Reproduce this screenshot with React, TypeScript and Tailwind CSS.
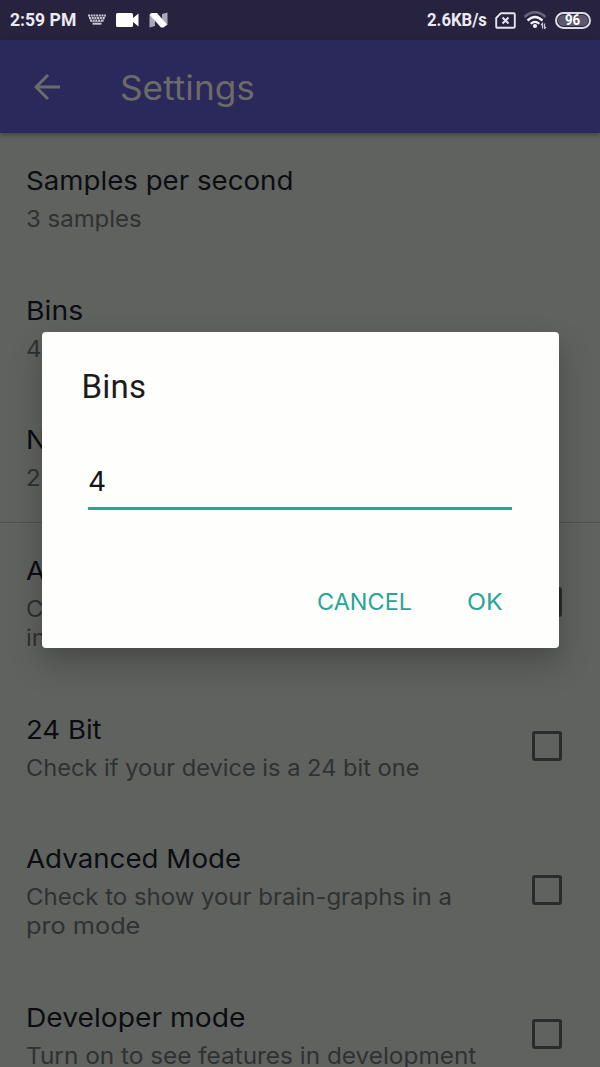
import type { ReactNode } from 'react';

const TITLE = 'w-max origin-left text-[26px] leading-[32px] text-[#0c0d12] whitespace-nowrap';
const SUMMARY = 'w-max origin-left text-[22.4px] leading-[28.8px] text-[#2f3132] whitespace-nowrap';

function StatusBar() {
  return (
    <header className="flex h-10 shrink-0 items-center bg-[#27233f] pl-[10px] pr-[9px] font-['Roboto',sans-serif] font-bold text-[#eceaf0]">
      <span className="w-[67px] origin-left scale-x-[0.95] whitespace-nowrap pt-[2px] text-[18.500px]">2:59 PM</span>
      <svg className="ml-[11px] h-[12px] w-[18px]" viewBox="0 0 18 12" fill="none" stroke="#c9c7d2">
        <path d="M0 1.500H18M1 4H17M2 6.500H16" strokeWidth="1.900" strokeDasharray="2 .7" />
        <path d="M.5 1L3 7.500H15L17.500 1" strokeWidth="1" opacity=".55" />
        <path d="M4.500 9.700H13.500" strokeWidth="2" />
      </svg>
      <svg className="ml-[10px] h-[16px] w-[23px]" viewBox="0 0 23 16" fill="#fdfdfd">
        <path d="M1.500 1H15.500Q17 1 17 2.500V6L22.500 1.500V14.500L17 10V13.500Q17 15 15.500 15H1.500Q0 15 0 13.500V2.500Q0 1 1.500 1Z" />
      </svg>
      <svg className="ml-[10px] h-[16px] w-[19px]" viewBox="0 0 19 16">
        <path d="M.5 2.500L6 1V14L.5 15.500ZM13 2L18.500 .5V13L13 15Z" fill="#a9a7b8" />
        <path d="M2 1H8L18 12.500L14.500 15.500H12L.8 3Z" fill="#fdfdfd" />
      </svg>
      <div className="ml-auto flex items-center">
        <span className="w-[60px] origin-left scale-x-[0.9] whitespace-nowrap pt-[2px] text-[18.500px]">2.6KB/s</span>
        <svg className="ml-[8px] h-[17px] w-[21px]" viewBox="0 0 21 17" fill="none" stroke="#e6e4ec">
          <path d="M6 1.200H18.500Q19.800 1.200 19.800 2.500V14.500Q19.800 15.800 18.500 15.800H2.500Q1.200 15.800 1.200 14.500V6Z" strokeWidth="1.900" strokeLinejoin="round" />
          <path d="M7.500 5.500L13.500 11.500M13.500 5.500L7.500 11.500" strokeWidth="2" />
        </svg>
        <svg className="ml-[8px] h-[18px] w-[24px]" viewBox="0 0 24 18" fill="none">
          <path d="M.5 6Q11 -3.500 21.500 6" stroke="#68657c" strokeWidth="2.500" />
          <path d="M3.500 9.500Q11 2.500 18.500 9.500" stroke="#f2f1f5" strokeWidth="2.400" />
          <path d="M6.700 12.800Q11 8.800 15.300 12.800" stroke="#f2f1f5" strokeWidth="2.200" />
          <circle cx="11" cy="15" r="2.100" fill="#f2f1f5" />
          <path d="M18.500 17.500V12.500L17 14M20.500 12.500V17.500L22 16" stroke="#c9c7d2" strokeWidth="1.200" />
        </svg>
        <div className="ml-[7px] flex h-[17px] w-[36px] items-center justify-center rounded-full border-2 border-[#dcdae3] p-px">
          <span className="flex h-full w-full items-center justify-center rounded-full bg-[#5c596f] leading-none text-white">
            <span className="scale-x-[0.88] text-[15px]">96</span>
          </span>
        </div>
      </div>
    </header>
  );
}

function AppBar() {
  return (
    <div className="z-[1] flex h-[93px] shrink-0 items-center bg-[#2b285b] pl-[34px] shadow-[0_2px_4px_rgba(0,0,0,0.3)]">
      <svg className="h-[26px] w-[26px]" viewBox="0 0 26 26" fill="none" stroke="#6b6b67" strokeWidth="3">
        <path d="M26 13H2M14 1L2 13L14 25" />
      </svg>
      <h1 className="ml-[59.500px] origin-left scale-x-[1.052] pt-[2px] text-[33.500px] leading-[40px] text-[#6b6b67]">Settings</h1>
    </div>
  );
}

function Row({ height, children, checkbox = false }: { height: string; children: ReactNode; checkbox?: boolean }) {
  return (
    <div className={`flex shrink-0 items-start justify-between pl-[26px] pr-[38px] ${height}`}>
      <div className="pt-[32px]">{children}</div>
      {checkbox && <span className="h-[30px] w-[30px] shrink-0 self-center rounded-[3px] border-[3px] border-[#2a2b2c]" />}
    </div>
  );
}

function Dialog() {
  return (
    <div className="absolute left-[41.500px] top-[332px] flex h-[316px] w-[517px] flex-col rounded-[4px] bg-[#fefefd] pl-[40px] pr-[47px] shadow-[0_16px_32px_2px_rgba(0,0,0,0.2),0_6px_10px_rgba(0,0,0,0.04)]">
      <h2 className="pt-[35px] font-['Roboto',sans-serif] text-[33px] leading-[40px] tracking-[0.2px] text-[#1c1c1e]">Bins</h2>
      <div className="ml-[6px] mt-[52px] h-[51px] border-b-[3px] border-[#26a598] pt-[4px] text-[27px] leading-[38px] text-[#151518]">
        <p className="w-max origin-left scale-x-[1.04]">4</p>
      </div>
      <div className="mt-[76px] flex justify-end pr-[9px] text-[23px] leading-[32px] text-[#26a598]">
        <span className="w-[95px] origin-left scale-x-[1.02]">CANCEL</span>
        <span className="ml-[55px] w-[36px] origin-left scale-x-[1.080]">OK</span>
      </div>
    </div>
  );
}

export default function App() {
  return (
    <div className="relative flex h-[1067px] w-[600px] flex-col overflow-hidden bg-[#60625f] font-['Inter',sans-serif]">
      <StatusBar />
      <AppBar />
      <Row height="h-[129.500px]">
        <p className={`${TITLE} scale-x-[1.064]`}>Samples per second</p>
        <p className={`${SUMMARY} mt-[8px] scale-x-[1.07]`}>3 samples</p>
      </Row>
      <Row height="h-[129.500px]">
        <p className={`${TITLE} scale-x-[1.090]`}>Bins</p>
        <p className={`${SUMMARY} mt-[8px] scale-x-[1.07]`}>4</p>
      </Row>
      <Row height="h-[130px]">
        <p className={`${TITLE} scale-x-[1.07]`}>N</p>
        <p className={`${SUMMARY} mt-[8px] scale-x-[1.07]`}>2</p>
      </Row>
      <div className="h-px shrink-0 bg-[#4f514f]" />
      <Row height="h-[158.500px]" checkbox>
        <p className={`${TITLE} scale-x-[1.07]`}>A</p>
        <p className={`${SUMMARY} mt-[8px] scale-x-[1.07]`}>C</p>
        <p className={`${SUMMARY} scale-x-[1.07]`}>in</p>
      </Row>
      <Row height="h-[129.500px]" checkbox>
        <p className={`${TITLE} scale-x-[1.059]`}>24 Bit</p>
        <p className={`${SUMMARY} mt-[8px] scale-x-[1.055]`}>Check if your device is a 24 bit one</p>
      </Row>
      <Row height="h-[158.500px]" checkbox>
        <p className={`${TITLE} scale-x-[1.066]`}>Advanced Mode</p>
        <p className={`${SUMMARY} mt-[8px] scale-x-[1.070]`}>Check to show your brain-graphs in a</p>
        <p className={`${SUMMARY} scale-x-[1.129]`}>pro mode</p>
      </Row>
      <Row height="h-[129.500px]" checkbox>
        <p className={`${TITLE} scale-x-[1.085]`}>Developer mode</p>
        <p className={`${SUMMARY} mt-[8px] scale-x-[1.088]`}>Turn on to see features in development</p>
      </Row>
      <Dialog />
    </div>
  );
}
